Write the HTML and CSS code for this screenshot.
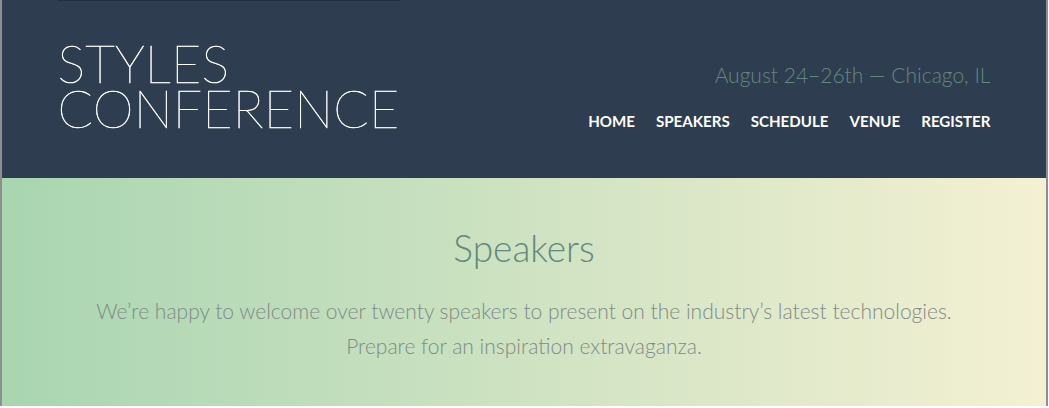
FILE: index.html
```html
<!DOCTYPE html>
<html lang="en">
<head>
<meta charset="utf-8">
<title>Styles Conference</title>
<link rel="stylesheet" href="styles.css">
</head>
<body>
<div class="frame">
  <header class="primary-header">
    <div class="container header-inner">
      <h1 class="logo">Styles<br>Conference</h1>
      <div class="header-right">
        <h3 class="tagline">August 24&ndash;26th &mdash; Chicago, IL</h3>
        <nav class="nav">
          <a href="#">Home</a>
          <a href="#">Speakers</a>
          <a href="#">Schedule</a>
          <a href="#">Venue</a>
          <a href="#">Register</a>
        </nav>
      </div>
    </div>
  </header>
  <section class="hero">
    <div class="container">
      <h2 class="hero-title">Speakers</h2>
      <p class="hero-text">We&rsquo;re happy to welcome over twenty speakers to present on the industry&rsquo;s latest technologies.<br>Prepare for an inspiration extravaganza.</p>
    </div>
  </section>
</div>
</body>
</html>
```
FILE: styles.css
```css
* { box-sizing: border-box; }
html, body { margin: 0; padding: 0; background: #fff; }
body { font-family: Lato, "Open Sans", sans-serif; }
.frame {
  width: 1048px;
  height: 406px;
  border-left: 2px solid #8d8f90;
  border-right: 2px solid #8d8f90;
  overflow: hidden;
}
.container { width: 933px; margin: 0 auto; }
.primary-header { background: #2e3d4f; height: 178px; }
.header-inner { display: flex; justify-content: space-between; align-items: flex-start; }
.logo {
  margin: 0;
  width: 342px;
  border-top: 1px solid #222e3b;
  padding-top: 40px;
  font-weight: 100;
  font-size: 52px;
  line-height: 45px;
  color: #fff;
  text-transform: uppercase;
  letter-spacing: 0.2px;
  -webkit-text-stroke: 0.5px #fff;
}
.header-right { display: flex; flex-direction: column; align-items: flex-end; padding-top: 60px; }
.tagline {
  margin: 0;
  font-weight: 300;
  font-size: 21px;
  line-height: 30px;
  color: #648880;
}
.nav { display: flex; gap: 21px; margin-top: 21px; }
.nav a {
  color: #fff;
  text-decoration: none;
  text-transform: uppercase;
  font-weight: 700;
  font-size: 15.1px;
  line-height: 20px;
}
.hero {
  height: 228px;
  background: linear-gradient(to right, #a9d5b1, #f4f0d3);
  text-align: center;
  padding-top: 46px;
}
.hero-title {
  margin: 0;
  font-weight: 300;
  font-size: 37px;
  line-height: 48px;
  color: #648880;
}
.hero-text {
  margin: 21px 0 0;
  font-weight: 300;
  font-size: 21px;
  line-height: 35px;
  color: #808a88;
}
```
